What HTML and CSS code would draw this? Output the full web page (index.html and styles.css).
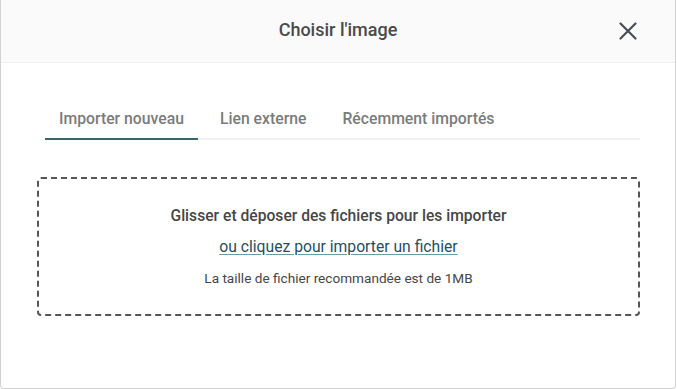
FILE: index.html
```html
<!DOCTYPE html>
<html lang="fr">
<head>
<meta charset="utf-8">
<title>Choisir l'image</title>
<link rel="stylesheet" href="styles.css">
</head>
<body>
<div class="modal">
  <header class="modal-header">
    <span></span>
    <h1 class="modal-title">Choisir l'image</h1>
    <button class="close" aria-label="Fermer">
      <svg width="18" height="18" viewBox="0 0 18 18"><path d="M1.5 1.5 L16.5 16.5 M16.5 1.5 L1.5 16.5" stroke="#4a4f55" stroke-width="2.2" stroke-linecap="round" fill="none"/></svg>
    </button>
  </header>
  <div class="modal-body">
    <nav class="tabs">
      <span class="tab active">Importer nouveau</span>
      <span class="tab">Lien externe</span>
      <span class="tab">Récemment importés</span>
    </nav>
    <div class="dropzone">
      <p class="drop-title">Glisser et déposer des fichiers pour les importer</p>
      <a class="drop-link" href="#">ou cliquez pour importer un fichier</a>
      <p class="drop-hint">La taille de fichier recommandée est de 1MB</p>
    </div>
  </div>
</div>
</body>
</html>
```
FILE: styles.css
```css
* { box-sizing: border-box; }
html, body { margin: 0; padding: 0; background: #fff; }
body { font-family: Roboto, "Noto Sans", sans-serif; }

.modal {
  width: 676px;
  height: 389px;
  border: 1px solid #d2d2d2;
  border-top: none;
  border-radius: 0 0 4px 4px;
  background: #fff;
  overflow: hidden;
}

.modal-header {
  height: 63px;
  background: #fafafa;
  border-bottom: 1px solid #efefef;
  display: grid;
  grid-template-columns: 1fr auto 1fr;
  align-items: center;
}

.modal-title {
  margin: 0;
  font-size: 18px;
  font-weight: 500;
  color: #4a4a4a;
  line-height: 22px;
  padding-bottom: 2px;
}

.close {
  justify-self: end;
  margin-right: 38px;
  padding: 0;
  border: none;
  background: none;
  width: 18px;
  height: 18px;
  display: flex;
}

.modal-body {
  padding: 36px 35px 0 36px;
}

.tabs {
  display: flex;
  gap: 8px;
  margin-left: 8px;
  border-bottom: 2px solid #f1f1f1;
}

.tab {
  padding: 10px 14px 9px;
  margin-bottom: -2px;
  font-size: 15.75px;
  font-weight: 500;
  line-height: 20px;
  color: #7b7b7b;
  border-bottom: 2px solid transparent;
}

.tab.active {
  border-bottom-color: #3a6670;
}

.dropzone {
  margin-top: 37px;
  height: 139px;
  border: 2px dashed #555;
  border-radius: 4px;
  display: flex;
  flex-direction: column;
  align-items: center;
  padding-top: 27px;
  text-align: center;
}

.drop-title {
  margin: 0;
  font-size: 15.65px;
  font-weight: 500;
  line-height: 20px;
  color: #464646;
}

.drop-link {
  margin-top: 11px;
  font-size: 15.7px;
  line-height: 20px;
  color: #24505e;
  text-decoration: underline;
  text-decoration-color: #6a9aa6;
  text-underline-offset: 2px;
}

.drop-hint {
  margin: 12px 0 0;
  font-size: 13.6px;
  line-height: 18px;
  color: #464646;
}
```
